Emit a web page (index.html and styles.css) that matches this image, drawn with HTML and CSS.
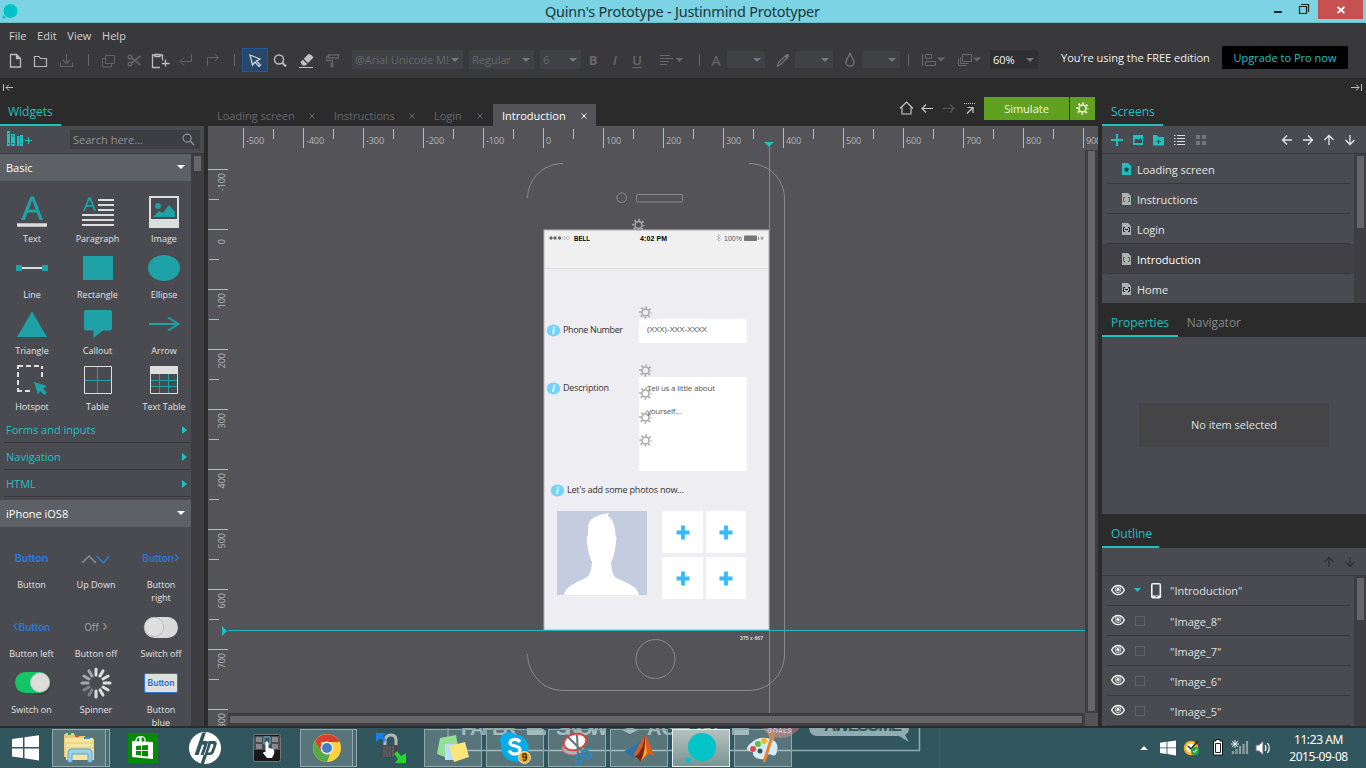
FILE: index.html
```html
<!DOCTYPE html>
<html lang="en">
<head>
<meta charset="utf-8">
<title>Quinn's Prototype - Justinmind Prototyper</title>
<link rel="stylesheet" href="styles.css">
</head>
<body>
<svg width="0" height="0" class="defs">
  <defs>
    <symbol id="gear" viewBox="0 0 14 14"><circle cx="7" cy="7" r="3.8" fill="none" stroke="currentColor" stroke-width="1.6"/><circle cx="7" cy="7" r="5.600" fill="none" stroke="currentColor" stroke-width="2.400" stroke-dasharray="1.800 2.598" stroke-dashoffset="0.900"/></symbol>
    <symbol id="info" viewBox="0 0 14 13"><ellipse cx="7" cy="6.5" rx="6.7" ry="6" fill="#72d4fb"/><path d="M7.8 2.8v1.6M7.4 5.3 6.4 9.8" stroke="#fff" stroke-width="1.7"/></symbol>
    <symbol id="eye" viewBox="0 0 14 12"><path d="M.7 6C3.5-.1 10.500-.1 13.300 6 10.500 12.100 3.500 12.100.7 6Z" fill="none" stroke="#f0f0f0" stroke-width="1.500"/><circle cx="7" cy="5.700" r="2.900" fill="none" stroke="#f0f0f0" stroke-width=".8"/><circle cx="7" cy="5.700" r="1.600" fill="#fff"/></symbol>
    <symbol id="arrow" viewBox="0 0 12 12"><path d="M11 6H2M6 1.500 1.500 6 6 10.500" fill="none" stroke="currentColor" stroke-width="1.300"/></symbol>
    <symbol id="close" viewBox="0 0 6 6"><path d="M.5.5l5 5M5.500.5l-5 5" stroke="currentColor" fill="none"/></symbol>
    <symbol id="glass" viewBox="0 0 14 14"><circle cx="5.500" cy="5.500" r="4.300" fill="none" stroke="currentColor" stroke-width="1.300"/><path d="M8.700 8.700 13 13" stroke="currentColor" stroke-width="1.600"/></symbol>
    <symbol id="page" viewBox="0 0 10 12"><path d="M0 0H6L9 3V12H0Z" fill="#a9b1b1"/><path d="M3 4.500H1.500V8.500H3M6 4.500H7.500V8.500H6" fill="none" stroke="currentColor"/></symbol>
    <symbol id="win" viewBox="0 0 27 26"><path d="M0 4 11 2.500V12H0ZM12.500 2.300 27 .2V12H12.500ZM0 13.500H11V23L0 21.500ZM12.500 13.500H27V25.500L12.500 23.300Z" fill="#fff"/></symbol>
  </defs>
</svg>
<div class="app">
  <header class="titlebar">
    <svg class="logo" width="20" height="20"><circle cx="10.500" cy="10" r="7" fill="#02c3c7"/><circle cx="4" cy="16" r="1.500" fill="#02c3c7"/></svg>
    <h1>Quinn's Prototype - Justinmind Prototyper</h1>
    <svg class="winbtns" width="50" height="20"><path d="M8 12h8" stroke="#1d2527" stroke-width="2"/><path d="M33.500 6.500h7v7h-7zM35 4.500h7.500v7.500M33 6.500h8" fill="none" stroke="#1d2527" stroke-width="1.200"/></svg>
    <div class="winclose"><svg width="8" height="8" viewBox="0 0 8 8"><path d="M.5 1l7 6M7.500 1l-7 6" stroke="#fff" stroke-width="1.800"/></svg></div>
  </header>

  <div class="commands">
    <nav class="menu"><span>File</span><span>Edit</span><span>View</span><span>Help</span></nav>
    <div class="toolbar">
      <i class="tool"><svg viewBox="0 0 26 24"><path d="M8.500 6.500h6l4 4v8.500h-10zM14.500 6.500v4h4" fill="none" stroke="#bbb" stroke-width="1.300"/><path d="M14 6v5h5z" fill="#bbb"/></svg></i>
      <i class="tool"><svg viewBox="0 0 26 24"><path d="M6.500 18.500v-10h4.500l1.500 2h6v8z" fill="none" stroke="#b5b5b5" stroke-width="1.200"/></svg></i>
      <i class="tool off"><svg viewBox="0 0 26 24"><path d="M6.500 14.500v4h12v-4M12.500 6v9M8.500 11.500l4 4 4-4" fill="none" stroke="currentColor" stroke-width="1.200"/></svg></i>
      <i class="sep"></i>
      <i class="tool off"><svg viewBox="0 0 26 24"><path d="M9.500 7.500h9v8h-9zM9 10.500h-2.500v8.500h9v-3" fill="none" stroke="currentColor"/></svg></i>
      <i class="tool off"><svg viewBox="0 0 26 24"><circle cx="8" cy="9" r="1.800" fill="none" stroke="currentColor" stroke-width="1.500"/><circle cx="8" cy="16" r="1.800" fill="none" stroke="currentColor" stroke-width="1.500"/><path d="M9.500 10 18.500 17M9.500 15 18.500 8" stroke="currentColor" stroke-width="2"/></svg></i>
      <i class="tool"><svg viewBox="0 0 26 24"><path d="M7 7h-2.500v12.500h7.500M12 7h2.500v5.500M7 6.500h5v2h-5z" fill="none" stroke="#bcbcbc" stroke-width="1.300"/><path d="M17.500 11.500v7M14 15.500h7.500" stroke="#bcbcbc" stroke-width="1.300"/></svg></i>
      <i class="tool off"><svg viewBox="0 0 26 24"><path d="M17.500 6v7.500h-11M10 9.500l-4 4 4 4" fill="none" stroke="currentColor"/></svg></i>
      <i class="tool off"><svg viewBox="0 0 26 24"><path d="M7.500 18v-8.500h11M14.500 6l4 3.500-4 4" fill="none" stroke="currentColor"/></svg></i>
      <i class="sep"></i>
      <i class="tool active"><svg viewBox="0 0 26 24"><path d="M8 7l10 4-3.500 2 4 4-1.500 1.500-4-4.500-2.500 3z" fill="none" stroke="#c9d3dc" stroke-width="1.300"/></svg></i>
      <i class="tool"><svg viewBox="0 0 26 24"><circle cx="11" cy="11.500" r="4.500" fill="none" stroke="#bbb" stroke-width="1.500"/><path d="M14 14.500l4 4" stroke="#bbb" stroke-width="2"/></svg></i>
      <i class="tool"><svg viewBox="0 0 26 24"><path d="M6.500 14l8-8q2.500-.5 5 3.500l-8 8h-3z" fill="#c2c2c2"/><path d="M9 11l4.500 4.500" stroke="#39393b" stroke-width="1.200"/><path d="M5 19.500h14" stroke="#c2c2c2"/></svg></i>
      <i class="tool off"><svg viewBox="0 0 26 24"><path d="M8.500 7h10v3h-10zM8.500 8.500h-2v4h6v2.500" fill="none" stroke="currentColor" stroke-width="1.300"/><path d="M12 14.500v5" stroke="currentColor" stroke-width="3"/></svg></i>
      <div class="combo font"><span>@Arial Unicode M!</span><b></b></div>
      <div class="combo style"><span>Regular</span><b></b></div>
      <div class="combo size"><span>6</span><b></b></div>
      <span class="fmt bold">B</span><span class="fmt ital">I</span><span class="fmt under">U</span>
      <svg class="para" width="25" height="16"><path d="M1 3.500h10M1 6.500h13M1 9.500h9M1 12.500h7" stroke="#68686a"/><path d="M17 6h7l-3.500 4z" fill="#68686a"/></svg>
      <i class="sep s1"></i>
      <span class="fmt color">A</span>
      <div class="combo swatch"><b></b></div>
      <svg class="brush" width="14" height="16"><path d="M1.500 14l1-3.500L9 4l2 2-6.500 6.500z" fill="none" stroke="#747476" stroke-width="1.200"/><path d="M8.500 4.500l2-2.500h2l.5 2.500-2 2z" fill="#747476"/></svg>
      <div class="combo swatch"><b></b></div>
      <svg class="drop" width="12" height="16"><path d="M6 1.500C4.500 5 2 7.500 2 10.500a4 3.700 0 0 0 8 0C10 7.500 7.500 5 6 1.500Z" fill="none" stroke="#777779" stroke-width="1.300"/></svg>
      <div class="combo swatch"><b></b></div>
      <i class="sep"></i>
      <svg class="arrange" width="62" height="16"><path d="M2.500 2v12M5.500 2.500h6v4h-6zM5.500 9.500h10v4h-10zM42.500 2.500h9v7h-9M42.500 2.500v7M40.500 5v6.500h8M38.500 7v6.500h8" fill="none" stroke="#68686a"/><path d="M17 5.500h8l-4 4zM53 5.500h8l-4 4z" fill="#68686a"/></svg>
      <div class="combo zoom"><span>60%</span><b></b></div>
      <span class="edition">You're using the FREE edition</span>
      <button class="upgrade">Upgrade to Pro now</button>
    </div>
  </div>

  <main class="workspace">
    <aside class="left">
      <div class="collapse"><svg width="12" height="8"><path d="M1.500 1v7M11 4.500H4M7 1.500l-3 3 3 3" fill="none" stroke="#b8bcbc"/></svg></div>
      <div class="tabs"><span class="tab on widgets">Widgets</span></div>
      <div class="search">
        <svg width="26" height="17"><path d="M1 1h3v15H1zM5 4h4v12H5zM11 6h2.500v10H11zM14 5h3v11h-3z" fill="#1fc0c0"/><path d="M2.500 3v1M2.500 13v1M6 6h2M6 13.500h2M15.500 7v1M15.500 13v1" stroke="#45464b"/><path d="M22.500 7v7M19 10.500h7" stroke="#1fc0c0" stroke-width="1.200"/></svg>
        <div class="field"><span>Search here...</span><svg width="13" height="13"><use href="#glass"/></svg></div>
      </div>
      <div class="palette">
        <div class="items">
          <div class="group">Basic<b></b></div>
          <div class="grid basic">
            <div><svg><path d="M9 30 18.500 6.500h3.500L31 30h-3.500l-2.800-7.500h-9L13 30zM16.800 19.500h6.800l-3.400-9.500z" fill="#1fa1a8"/><path d="M5 35h30" stroke="#ddd" stroke-width="3.500"/></svg>Text</div>
            <div><svg><path d="M5 21 10.500 7.500h2.200L18 21h-2l-1.500-4.200h-6L7 21zM9.200 15h4.700l-2.300-5.500z" fill="#1fa1a8"/><path d="M20 10h16M20 15h16M20 20h16M4 25h32M4 30h32M4 35h32" stroke="#ddd" stroke-width="2"/></svg>Paragraph</div>
            <div><svg><path d="M5 6h30v32H5zM7 8v21h26V8z" fill="#ddd" fill-rule="evenodd"/><circle cx="14" cy="16" r="3" fill="#1fa1a8"/><path d="M9 27l6-6 4 2 6-8 6 7v5z" fill="#1fa1a8"/></svg>Image</div>
            <div><svg><path d="M10 22h20" stroke="#ddd" stroke-width="2"/><path d="M4 19h6v6H4zM30 19h6v6h-6z" fill="#1fa1a8"/></svg>Line</div>
            <div><svg><path d="M5 10h30v24h-30z" fill="#1fa1a8"/></svg>Rectangle</div>
            <div><svg><ellipse cx="20" cy="22" rx="16" ry="13" fill="#1fa1a8"/></svg>Ellipse</div>
            <div><svg><path d="M20 9.500 35 35H5z" fill="#1fa1a8"/></svg>Triangle</div>
            <div><svg><path d="M8 8h24q2 0 2 2v16q0 2.500-2 2.500h-7L15.500 36v-7.500H8q-2 0-2-2.500V10q0-2 2-2z" fill="#1fa1a8"/></svg>Callout</div>
            <div><svg><path d="M5 22h29M24 15.500l10.500 6.500L24 28.500" fill="none" stroke="#1fa1a8" stroke-width="2"/></svg>Arrow</div>
            <div><svg><path d="M6 11V8h5M14 8h5M22 8h5M30 8v3M30 14v5M6 14v5M6 22v5M6 30v3h4M13 33h5" fill="none" stroke="#ddd" stroke-width="2"/><path d="M22 24l13 4-4 2.500 4 4-2.500 2.500-4.500-4-2 4z" fill="#1fa1a8"/></svg>Hotspot</div>
            <div><svg><path d="M6.500 8.500h27v27h-27z" fill="none" stroke="#ddd"/><path d="M19.500 9v26M7 22.500h26" stroke="#1fa1a8"/></svg>Table</div>
            <div><svg><path d="M6 8h28v8H6z" fill="#ddd"/><path d="M15.500 16v19M24.500 16v19M7 22.500h26M7 28.500h26" stroke="#1fa1a8"/><path d="M6.500 8.500h27v27h-27z" fill="none" stroke="#ddd"/></svg>Text Table</div>
          </div>
          <div class="cat">Forms and inputs<b></b></div>
          <div class="cat">Navigation<b></b></div>
          <div class="cat">HTML<b></b></div>
          <div class="group ios-head">iPhone iOS8<b></b></div>
          <div class="grid ios">
            <div><em class="strong">Button</em>Button</div>
            <div><svg><path d="M6 25l7-7 7 7" fill="none" stroke="#8b8b8e" stroke-width="1.500"/><path d="M20.500 18l7 7 6-7" fill="none" stroke="#3276d2" stroke-width="1.500"/></svg>Up Down</div>
            <div><em>Button<small>›</small></em>Button<br>right</div>
            <div><em><small>‹</small>Button</em>Button left</div>
            <div><em class="grey">Off <small>›</small></em>Button off</div>
            <div><svg><rect x="3" y="10" width="34" height="21" rx="10.500" fill="#d9dad9"/><circle cx="13" cy="20" r="9.700" fill="#dedfde" stroke="#aaa" stroke-width=".7"/></svg>Switch off</div>
            <div><svg><circle cx="29" cy="22" r="10" fill="#3d3e42"/><rect x="3" y="9" width="35" height="21" rx="10.500" fill="#13c565"/><circle cx="28" cy="19.500" r="9.700" fill="#dcdddc" stroke="#bbb" stroke-width=".5"/></svg>Switch on</div>
            <div><svg><g stroke="#ddd" stroke-width="3" stroke-linecap="round"><path d="M20 6v6"/><path d="M20 6v6" transform="rotate(30 20 20)"/><path d="M20 6v6" transform="rotate(60 20 20)"/><path d="M20 6v6" transform="rotate(90 20 20)"/><path d="M20 6v6" transform="rotate(120 20 20)"/><path d="M20 6v6" transform="rotate(150 20 20)"/><path d="M20 6v6" transform="rotate(180 20 20)"/><g stroke="#808184"><path d="M20 6v6" transform="rotate(210 20 20)"/><path d="M20 6v6" transform="rotate(240 20 20)"/></g><g stroke="#a8a8ab"><path d="M20 6v6" transform="rotate(270 20 20)"/><path d="M20 6v6" transform="rotate(300 20 20)"/><path d="M20 6v6" transform="rotate(330 20 20)"/></g></g></svg>Spinner</div>
            <div><em class="boxed"><span>Button</span></em>Button<br>blue</div>
          </div>
        </div>
        <div class="scroll"><i class="thumb t-left"></i></div>
      </div>
    </aside>

    <section class="center">
      <div class="editorbar">
        <div class="doctabs">
          <span class="doc d1">Loading screen<svg><use href="#close"/></svg></span>
          <span class="doc d2">Instructions<svg><use href="#close"/></svg></span>
          <span class="doc d3">Login<svg><use href="#close"/></svg></span>
          <span class="doc current">Introduction<svg><use href="#close"/></svg></span>
        </div>
        <div class="navicons">
          <svg viewBox="0 0 21 14"><path d="M4 7.500 10.500 1 17 7.500M6 6.500v6.500h9V6.500" fill="none" stroke="#c8caca" stroke-width="1.100"/></svg>
          <svg viewBox="0 0 21 14"><path d="M16 7.500H5M9 3.500l-4 4 4 4" fill="none" stroke="#c8caca" stroke-width="1.100"/></svg>
          <svg viewBox="0 0 21 14"><path d="M5 7.500h11M12 3.500l4 4-4 4" fill="none" stroke="#565658" stroke-width="1.100"/></svg>
          <svg viewBox="0 0 21 14"><path d="M5 2.500h11" stroke="#c8caca" stroke-dasharray="1 1"/><path d="M8 12.500l5.500-5.500M8.500 6.500h5.500v5.500" fill="none" stroke="#c8caca" stroke-width="1.200"/></svg>
        </div>
        <button class="simulate">Simulate</button>
        <button class="simgear"><svg width="13" height="13"><use href="#gear"/></svg></button>
      </div>
      <div class="hruler"><span>-500</span><span>-400</span><span>-300</span><span>-200</span><span>-100</span><span>0</span><span>100</span><span>200</span><span>300</span><span>400</span><span>500</span><span>600</span><span>700</span><span>800</span><span>900</span>
        <svg class="hmark" width="10" height="8"><path d="M0 0h10L5 5z" fill="#1fc0c0"/><path d="M5.500 5v3" stroke="#2ab0b5"/></svg>
      </div>
      <div class="editor">
        <div class="vruler"><span><u>-100</u></span><span class="zero"><u>0</u></span><span><u>100</u></span><span><u>200</u></span><span><u>300</u></span><span><u>400</u></span><span><u>500</u></span><span><u>600</u></span><span><u>700</u></span><span><u>800</u></span>
          <svg class="vmark" width="6" height="10"><path d="M0 0v10l5-5z" fill="#1fc0c0"/></svg>
        </div>
        <div class="stage">
          <svg class="canvas" width="857" height="563" viewBox="228 150 857 563">
            <g fill="none" stroke="#8a8a8d">
              <path d="M527.500 198C528 179 543 163.500 563 163.500M749 163.500C769 163.500 784 179 784.500 198V655C784 674 769 690.500 749 690.500H563C543 690.500 528 674 527.500 654"/>
              <circle cx="621.700" cy="197.700" r="4.800"/><rect x="636.500" y="194.500" width="46" height="7.500" rx="1.500"/><circle cx="655.500" cy="659" r="19.500"/>
            </g>
            <rect x="544" y="230" width="225" height="400" fill="#eeedf2" stroke="#b5b5b7"/>
            <rect x="545" y="231" width="223" height="37" fill="#f0f0f0"/><path d="M545 268.500h223" stroke="#dfdfe1"/>
            <g fill="#666"><circle cx="551" cy="238" r="1.700"/><circle cx="555" cy="238" r="1.700"/><circle cx="559.500" cy="238" r="1.700"/></g>
            <g fill="none" stroke="#aaa" stroke-width=".6"><circle cx="564" cy="238" r="1.500"/><circle cx="568" cy="238" r="1.500"/></g>
            <g class="status"><text x="574" y="240.500" textLength="16" lengthAdjust="spacingAndGlyphs">BELL</text><text x="640" y="240.500" textLength="27">4:02 PM</text><text x="724" y="241" textLength="18" class="pct">100%</text></g>
            <path d="M716.500 236l4 3.500-2 2v-7l2 2-4 3.500" fill="none" stroke="#aaa" stroke-width=".6"/>
            <rect x="744" y="235.500" width="13" height="5.500" rx=".8" fill="#777"/><path d="M758.500 237v3M760.500 238h3M762 236.500v3.500" stroke="#888" stroke-width="1"/>
            <g fill="#fff"><path d="M639 319h108v24H639zM639 377h108v94H639zM662 511h41v42h-41zM706 511h40v42h-40zM662 557h41v42h-41zM706 557h40v42h-40z"/></g>
            <g color="#aaaaad"><use href="#gear" x="632" y="218.500" width="13" height="13"/><use href="#gear" x="639" y="306" width="13" height="13"/><use href="#gear" x="639" y="364" width="13" height="13"/><use href="#gear" x="639" y="387" width="13" height="13"/><use href="#gear" x="639" y="411" width="13" height="13"/><use href="#gear" x="639" y="434" width="13" height="13"/></g>
            <use href="#info" x="546.500" y="324" width="14" height="13"/><use href="#info" x="546.500" y="382" width="14" height="13"/><use href="#info" x="550.500" y="484" width="14" height="13"/>
            <g class="label"><text x="563" y="333" textLength="60">Phone Number</text><text x="563" y="391" textLength="46">Description</text><text x="567" y="493" textLength="117">Let's add some photos now...</text></g>
            <g class="hint"><text x="647" y="332" textLength="60" lengthAdjust="spacingAndGlyphs">(XXX)-XXX-XXXX</text><text x="647" y="391" textLength="68">Tell us a little about</text><text x="647" y="414" textLength="34">yourself...</text></g>
            <rect x="557" y="511" width="90" height="84" fill="#c4cce0"/>
            <path d="M564 595C565 586 576 583 587 577Q591 575 592 562C589 557 588 550 587 542Q586 536 588 535V526C589 519 596 514.500 609 513Q607 516 609 517C613 520 615 525 615.500 535Q617 537 616 542C615 550 614 557 611 562Q612 575 615 577C626 583 638 586 639 595Z" fill="#fff"/>
            <path d="M683 525.500v14M676.500 532.500h13M726 525.500v14M719.500 532.500h13M683 571.500v14M676.500 578.500h13M726 571.500v14M719.500 578.500h13" stroke="#38baf6" stroke-width="3.800"/>
            <text class="dims" x="740" y="640" textLength="23">375 x 667</text>
            <path d="M769.500 150v563M228 630.500h857" stroke="#22b6ba"/>
          </svg>
          <div class="hscroll"><i></i></div>
        </div>
        <div class="vscroll"><i></i></div>
      </div>
    </section>

    <aside class="right">
      <div class="collapse end"><svg width="12" height="8"><path d="M10.500 1v7M0 4.500h8M5 1.500l3 3-3 3" fill="none" stroke="#b8bcbc"/></svg></div>
      <div class="tabs"><span class="tab on">Screens</span></div>
      <div class="bar">
        <svg width="110" height="16"><path d="M15 2v12M9 8h12" stroke="#1fc0c0" stroke-width="2"/><path d="M31 3h10v10H31z" fill="#1fc0c0"/><path d="M32.500 11V8l2-1.500 2 1.500 2-2 1.500 2v3z" fill="#45464b"/><path d="M51 3h4l1.500 2H62v8.500H51z" fill="#1fc0c0"/><path d="M56.500 7v5M54 9.500h5" stroke="#45464b"/><path d="M72 3.500h1.500M75 3.500h8M72 6.500h1.500M75 6.500h8M72 9.500h1.500M75 9.500h8M72 12.500h1.500M75 12.500h8" stroke="#ddd"/><path d="M94 3h4v4h-4zM100 3h4v4h-4zM94 9h4v4h-4zM100 9h4v4h-4z" fill="#747579"/></svg>
        <div class="arrows"><svg><use href="#arrow"/></svg><svg class="r180"><use href="#arrow"/></svg><svg class="r90"><use href="#arrow"/></svg><svg class="r270"><use href="#arrow"/></svg></div>
      </div>
      <div class="listwrap">
        <ul class="screens">
          <li><svg width="10" height="12"><path d="M0 0H6L9 3V12H0Z" fill="#1fc0c0"/><path d="M4.500 3.500l1 2 2 .2-1.500 1.600.5 2.200-2-1.200-2 1.200.5-2.200L1.500 5.700l2-.2z" fill="#253538"/></svg><span>Loading screen</span></li>
          <li class="red"><svg width="10" height="12"><use href="#page"/></svg><span>Instructions</span></li>
          <li><svg width="10" height="12"><use href="#page"/><path d="M3 6.500h3" stroke="#222"/></svg><span>Login</span></li>
          <li class="red sel"><svg width="10" height="12"><use href="#page"/></svg><span>Introduction</span></li>
          <li><svg width="10" height="12"><use href="#page"/><path d="M3 6.500h3" stroke="#222"/></svg><span>Home</span></li>
        </ul>
        <div class="scroll"><i class="thumb t-screens"></i></div>
      </div>
      <div class="tabs"><span class="tab on">Properties</span><span class="tab">Navigator</span></div>
      <div class="props"><div>No item selected</div></div>
      <div class="tabs"><span class="tab on outline-tab">Outline</span></div>
      <div class="bar faint"><div class="arrows"><svg class="r90"><use href="#arrow"/></svg><svg class="r270"><use href="#arrow"/></svg></div></div>
      <div class="listwrap">
        <ul class="outline">
          <li class="root"><svg width="14" height="12"><use href="#eye"/></svg><svg class="device" width="28" height="18"><path d="M0 6h7l-3.500 4z" fill="#1fc0c0"/><rect x="17.800" y="1.800" width="8.500" height="14" rx="1" fill="none" stroke="#f2f2f2" stroke-width="1.600"/><path d="M18 13.500h8v2.500h-8z" fill="#f2f2f2"/><path d="M21.500 14.500h1.500" stroke="#444"/></svg><span>"Introduction"</span></li>
          <li><svg width="14" height="12"><use href="#eye"/></svg><i></i><span>"Image_8"</span></li>
          <li><svg width="14" height="12"><use href="#eye"/></svg><i></i><span>"Image_7"</span></li>
          <li><svg width="14" height="12"><use href="#eye"/></svg><i></i><span>"Image_6"</span></li>
          <li><svg width="14" height="12"><use href="#eye"/></svg><i></i><span>"Image_5"</span></li>
        </ul>
        <div class="scroll"><i class="thumb t-outline"></i></div>
      </div>
    </aside>
  </main>

  <footer class="taskbar">
    <svg class="wall" width="520" height="40" viewBox="440 728 520 40">
      <g class="poster"><text x="461" y="735" textLength="56">PAPER</text><text x="556" y="735" textLength="52">SNOW</text><text x="647" y="735" textLength="75">A GHOST</text></g>
      <path d="M527 728h14l5 3v4h-19zM732 728h17v7h-17zM622 730l8 4 8-4-8-3z" fill="#91acb1"/>
      <path d="M448 728v22.500" fill="none" stroke="#8aa6ab"/><path d="M440 750.500h475M919.500 728v22.500H911" fill="none" stroke="#91acb1" stroke-width="1.500"/>
      <path d="M809 728q1 8 8 8h82l10 6-4-7q4-2 4-7z" fill="#91acb1"/><circle cx="781" cy="716" r="22" fill="#85686f"/>
      <text class="goals" x="767" y="733" textLength="24">GOALS</text><text class="bubble" x="824" y="731" textLength="78">AWESOME</text>
      <path d="M939.500 728v40" stroke="#3b626a"/>
    </svg>
    <div class="t start"><svg width="27" height="26"><use href="#win"/></svg></div>
    <div class="t box explorer"><svg width="34" height="34" viewBox="0 0 34 34"><path d="M2 4l2-2h8l1 3h10l1 3h8v18H2z" fill="#e9cb72"/><path d="M3 7h28l1 22H4z" fill="#f6e5a0"/><path d="M4 12h27M4 17h28" stroke="#e0c670"/><path d="M6 2h3v2H6z" fill="#29a33b"/><path d="M13 4h4v2h-4z" fill="#dd4a30"/><path d="M22 6h6v2h-6z" fill="#2a92d8"/><path d="M6 31V21q0-3 4-3h16q4 0 4 3v10h-4v-8H10v8z" fill="#9ad1ee" stroke="#5aa4ce"/></svg></div><i class="stack"></i>
    <div class="t store"><svg width="30" height="30"><path d="M0 0h30v30H0z" fill="#078a08"/><path d="M4 8l21 1v17l-21-2z" fill="#fff"/><path d="M8 9V7q1-4 5-3v5M12 9V5q3-3 5 1v3" fill="none" stroke="#fff" stroke-width="1.200"/><path d="M8 13l5-.5v4.500H8zM14 12.500l6-.5v5h-6zM8 18h5v4.500L8 22zM14 18h6v5.500l-6-.6z" fill="#078a08"/></svg></div>
    <div class="t hp"><svg width="32" height="32"><circle cx="16" cy="16" r="16" fill="#fff"/><path d="M13 1 5.500 23h4l3.500-10q1-1 2 0l-3.500 10h4L19 12q1-3-2-3h-3L17 0zM19.500 9h6q3 .5 2 4l-2.500 7q-1 3-4 3h-3l-3 9h-3.500zM22 12l-3 8.500h2q1 0 1.500-2l2-5q.2-1.500-1-1.500z" fill="#32565d"/></svg></div>
    <div class="t touch"><svg width="28" height="28"><rect x=".5" y=".5" width="27" height="27" rx="2" fill="#18191c" stroke="#777"/><path d="M1 2h26v14H1z" fill="#4b4d52"/><path d="M3 3h6v5H3zM19 3h6v5h-6zM3 10h6v5H3zM19 10h6v5h-6z" fill="#85878a"/><path d="M11 3h6v7h-6z" fill="none" stroke="#53b8df"/><path d="M12.500 8q2-2 3 1v5l4.500 1q2 1 1 5l-2 4h-5l-4-5q1-2 2.500-.5z" fill="#fff"/></svg></div>
    <div class="t box chrome"><svg width="28" height="28"><circle cx="14" cy="14" r="14" fill="#ffd23e"/><path d="M14 28A14 14 0 0 1 2 7l7 11q3 3 8 2z" fill="#55a946"/><path d="M8 8h18.500A14 14 0 0 0 2 7l6 10z" fill="#db3d32"/><circle cx="14" cy="14" r="6.400" fill="#eee"/><circle cx="14" cy="14" r="5" fill="#3f7fc4"/></svg></div><i class="stack"></i>
    <div class="t lock"><svg width="32" height="32"><path d="M10 14V8q1-5 6-5t5 5v6" fill="none" stroke="#b4b8ba" stroke-width="3"/><rect x="6" y="13" width="18" height="13" rx="2" fill="#44484a"/><path d="M9 14v11M12 14v11M15 14v11M18 14v11" stroke="#707476"/><path d="M1 1h10l-3 3 3 4-2 2-3-4-5 4z" fill="#1681ed"/><path d="M31 31H20l3-4-4-5 3-3 4 5 5-3z" fill="#23d52d"/></svg></div>
    <div class="t box wide notes"><svg width="34" height="32"><path d="M4 6l16-3 3 17-14 5L1 22z" fill="#93df95"/><path d="M9 12h13l3 16H9z" fill="#b8defc"/><path d="M13 14l16-4 4 15-15 5z" fill="#fae67a"/></svg></div>
    <div class="t box wide"><svg width="34" height="34"><circle cx="11" cy="10" r="9" fill="#04acec"/><circle cx="17" cy="17" r="13.500" fill="#04acec"/><circle cx="22" cy="23" r="8" fill="#04acec"/><path d="M22 11q-2-3-6-2.500-4 .5-4 3.500 0 2 5 3t5 4q0 4-5 4-4 0-6-3.500" fill="none" stroke="#fff" stroke-width="3.200"/><circle cx="26.500" cy="26.500" r="6" fill="#f9ad19" stroke="#ddd"/><text x="23.800" y="30" class="badge">9</text></svg></div>
    <div class="t box wide"><svg width="34" height="34"><ellipse cx="13" cy="17" rx="11" ry="7" fill="#a4b4b7" stroke="#c66"/><ellipse cx="15" cy="11" rx="11.500" ry="8" transform="rotate(-15 15 11)" fill="#f5f8f8" stroke="#d94242" stroke-width="2"/><path d="M8 6l16 16M17 4l1 20" stroke="#65767a" stroke-width="2"/><ellipse cx="27" cy="23" rx="5" ry="3" transform="rotate(35 27 23)" fill="none" stroke="#238ac9" stroke-width="2"/><ellipse cx="19" cy="28" rx="3" ry="5" transform="rotate(15 19 28)" fill="none" stroke="#238ac9" stroke-width="2"/></svg></div>
    <div class="t box wide"><svg width="32" height="30"><path d="M1 18l12-6L23 2l-6 20-7 3z" fill="#2d73a8"/><path d="M11 21Q18 9 22 1q4 8 9 22-5-4-8 0l-6 6q-1-5-5-5z" fill="#df5a17"/><path d="M22 1q-1 16-10 23 3 0 5 5l5-8z" fill="#762719"/><path d="M22 3q1 13-4 25l6-7z" fill="#f7a522"/></svg></div>
    <div class="t box wide live"><svg width="32" height="32"><circle cx="17" cy="15" r="14" fill="#02c3c7"/><circle cx="3" cy="28" r="2.800" fill="#02c3c7"/></svg></div>
    <div class="t box wide"><svg width="34" height="34"><path d="M5 12Q13 4 25 8q8 3 6 12-1 6-5 4-4-2-5 1-1 4-7 3-8-1-7-7-7-1-6-4 1-3 4-5z" fill="#d6ebf8"/><circle cx="7" cy="18" r="3" fill="#e34b4b"/><circle cx="12" cy="13" r="3" fill="#62bb46"/><circle cx="18" cy="10" r="3" fill="#f6b629"/><circle cx="14" cy="20" r="2.500" fill="#32565d"/><path d="M18 31l7-22" stroke="#e8832b" stroke-width="3"/><path d="M24 9l-2-6 8-3-2 10z" fill="#c28b5c"/></svg></div>
    <div class="tray">
      <svg width="150" height="24"><path d="M3 14h8l-4-4z" fill="#eee"/><svg x="23" y="4" width="16" height="16"><use href="#win"/></svg><circle cx="54" cy="12" r="6" fill="#fff" stroke="#f1b323" stroke-width="2.500"/><path d="M51 10l3 3 7-8" fill="none" stroke="#222" stroke-width="1.500"/><circle cx="58" cy="15" r="4.200" fill="#28a34a"/><path d="M56 15l1.500 1.500L60 13" fill="none" stroke="#fff"/><path d="M79 5v-1.500h4V5h2.500v14h-9V5z" fill="#fff" stroke="#111"/><path d="M78.500 7.500h5v9h-5z" fill="#f5f5f5" stroke="#222"/><path d="M96 18v-3M99.500 18v-5M103 18V10M106.500 18V8M110 18V5" stroke="#8fa0a2" stroke-width="2.200"/><path d="M98 4v8M94 8h8M95 5l6 6M101 5l-6 6" stroke="#eee"/><path d="M119 9h3l4-4v14l-4-4h-3z" fill="#fff" stroke="#667"/><path d="M128 9q2 3 0 6M130.500 7q3.500 5 0 10" fill="none" stroke="#fff" stroke-width="1.200"/></svg>
      <div class="clock"><div>11:23 AM</div><div>2015-09-08</div></div>
    </div>
  </footer>
</div>
</body>
</html>
```
FILE: styles.css
```css
* { box-sizing: border-box; }
body { margin: 0; width: 1366px; height: 768px; overflow: hidden; background: #2b2b2b; font: 11px/14px "Open Sans", "Noto Sans", sans-serif; color: #dfe1e1; }
.defs { position: absolute; }
svg { display: block; flex: none; }
i, u, em { font-style: normal; text-decoration: none; }
button { border: 0; padding: 0; font: inherit; }
ul { margin: 0; padding: 0; list-style: none; }
.app { height: 768px; display: flex; flex-direction: column; }

.titlebar { height: 23px; background: #7bd3e4; border-bottom: 1px solid #6ebbca; display: flex; align-items: flex-start; }
.logo { margin-top: 1px; }
.titlebar h1 { margin: 0 0 0 525px; width: 276px; font: 400 14.500px/23px "Noto Sans", sans-serif; letter-spacing: -.23px; color: #20363b; white-space: nowrap; }
.winbtns { margin-left: 445px; }
.winclose { margin-left: 2px; width: 45px; height: 19px; background: #c75050; display: flex; align-items: center; justify-content: center; }

.commands { height: 55px; background: #39393b; }
.menu { height: 25px; padding-left: 9px; display: flex; gap: 10.700px; line-height: 26px; color: #d0d2d2; }
.toolbar { height: 24px; padding-left: 2px; display: flex; align-items: center; color: #77797b; }
.tool { width: 26px; height: 24px; flex: none; }
.tool svg { width: 26px; height: 24px; }
.off { color: #626264; }
.active { background: #28476b; border: 1px solid #1d5998; }
.active svg { margin: -1px; }
.sep { width: 16px; height: 12px; flex: none; background: linear-gradient(#68686a, #68686a) 8px 0 / 1px 12px no-repeat; }
.combo { height: 19px; flex: none; padding: 0 4px 0 3px; display: flex; align-items: center; justify-content: space-between; background: #404145; color: #65686b; white-space: nowrap; overflow: hidden; margin-top: -1px; }
.combo b { flex: none; margin-left: auto; border: 4px solid transparent; border-top-color: #76797c; border-bottom: 0; }
.combo span { overflow: hidden; }
.font { width: 111px; margin-left: 6px; }
.style { width: 65px; margin-left: 6px; }
.size { width: 41px; margin-left: 6px; }
.fmt { width: 22px; flex: none; text-align: center; font-size: 13px; color: #68686a; }
.bold { font-weight: 700; margin-left: 1px; }
.ital { font-style: italic; font-weight: 600; }
.under { text-decoration: underline; font-weight: 600; text-underline-offset: 2px; }
.para { margin-left: 11px; }
.s1 { margin-left: 7px; }
.color { width: 20px; font-size: 15px; margin: 0 1px 0 -1px; }
.swatch { width: 38px; height: 17px; }
.brush { margin: 0 5px 0 11px; }
.drop { margin: 0 6px 0 11px; }
.arrange { margin-left: 4px; }
.zoom { width: 48px; margin-left: 8px; background: #303032; color: #f2f2f2; }
.edition { margin: -5px 0 0 23px; width: 151px; flex: none; white-space: nowrap; color: #eee; }
.upgrade { margin: -5px 0 0 10px; width: 126px; height: 23px; background: #000; color: #1fc0c0; }

.workspace { height: 650px; padding-bottom: 2px; display: grid; grid-template-columns: 204px 890px 264px; column-gap: 4px; }
.left, .center, .right { min-width: 0; min-height: 0; display: flex; flex-direction: column; height: 648px; overflow: hidden; }
.collapse { height: 14px; padding: 5px 0 0 2px; flex: none; }
.end { padding-left: 249px; }
.tabs { height: 34px; flex: none; display: flex; font-size: 12px; line-height: 39px; }
.tab { padding: 0 8.600px 0 9px; color: #85888a; }
.on { color: #1fc0c0; border-bottom: 2px solid #1fc0c0; }
.widgets { padding: 0 8px; }
.outline-tab { padding-right: 7px; }
.search { height: 28px; flex: none; padding: 4px 4px 0 6px; background: #4a4b50; border-bottom: 1px solid #38383b; display: flex; gap: 38px; }
.field { width: 130px; height: 19px; padding: 0 5px 0 3px; background: #3d3e42; display: flex; align-items: center; justify-content: space-between; color: #909396; }
.palette { flex: 1; min-height: 0; display: flex; }
.items { width: 191px; background: #4a4b50; overflow: hidden; }
.scroll { flex: 1; background: #3e3e42; padding: 2px 0 0 3px; }
.thumb { display: block; width: 7px; background: #666668; }
.t-left { height: 15px; }
.t-screens { height: 72px; }
.t-outline { height: 42px; }
.group { height: 27px; padding: 0 6px; background: #5d6065; color: #fff; line-height: 27px; display: flex; justify-content: space-between; align-items: center; }
.group b { border: 4px solid transparent; border-top-color: #fff; border-bottom: 0; margin-top: -2px; }
.ios-head { margin-top: 3px; }
.grid { display: grid; grid-template-columns: 64px 67px 66px; font-size: 9px; text-align: center; color: #e2e3e3; }
.grid > div { display: flow-root; }
.grid svg { width: 40px; height: 40px; margin: 0 auto; }
.basic { padding-top: 9px; height: 235px; grid-auto-rows: 56px; line-height: 17px; }
.ios { padding-top: 11px; grid-template-rows: 69px 56px 56px; grid-template-columns: 63px 66px 64px; line-height: 13px; }
.ios em { height: 40px; display: flex; align-items: center; justify-content: center; font: 600 10px "Inter", sans-serif; color: #2a78d5; }
.ios em.strong { font-size: 10.500px; font-weight: 700; }
.ios small { font-size: 15px; font-weight: 400; line-height: 10px; margin-top: -2px; }
.ios .grey { color: #929396; gap: 3px; font-weight: 500; }
.ios .boxed span { width: 34px; height: 20px; border: 1px solid #2a78d5; border-radius: 2px; background: #dedfdf; font-size: 8.500px; line-height: 19px; color: #1e6ed2; }
.cat { height: 27px; margin-left: 4px; padding: 1px 4px 0 2px; border-bottom: 1px solid #38383b; color: #1fc0c0; display: flex; align-items: center; justify-content: space-between; }
.cat b { border: 4px solid transparent; border-left: 5px solid #1fc0c0; border-right: 0; }

.editorbar { height: 48px; flex: none; display: flex; align-items: flex-start; }
.doctabs { width: 688px; height: 48px; display: flex; align-items: flex-end; color: #66686a; }
.doc { height: 22px; padding: 2px 9px 0; display: flex; justify-content: space-between; align-items: center; white-space: nowrap; }
.doc svg { width: 6px; height: 6px; }
.d1 { width: 116px; }
.d2 { width: 101px; padding-left: 10px; padding-right: 10px; }
.d3 { width: 68px; padding-right: 10px; }
.current { width: 103px; background: #545358; color: #fff; }
.navicons { margin-top: 23px; width: 88px; display: flex; }
.navicons svg { width: 21px; height: 14px; }
.simulate, .simgear { height: 23px; margin-top: 19px; background: #60a11f; color: #eef5e6; }
.simulate { width: 85px; }
.simgear { width: 25px; margin-left: 1px; padding-left: 6px; }
.hruler { position: relative; height: 24px; flex: none; padding-left: 35px; background: #545358; display: flex; overflow: hidden; font-size: 9px; color: #b5b7ba; }
.hruler span { width: 60px; flex: none; padding: 8px 0 0 3px; line-height: 13px; letter-spacing: -.1px; background: linear-gradient(#b5babb, #b5babb) 0 2px / 1px 20px no-repeat, linear-gradient(#b5babb, #b5babb) 30px 3px / 1px 10px no-repeat; }
.hmark { position: absolute; left: 556px; top: 16px; }
.editor { flex: 1; min-height: 0; display: flex; background: #545358; }
.vruler { position: relative; width: 20px; padding-top: 19px; overflow: hidden; font-size: 9px; color: #b5b7ba; }
.vruler span { height: 60px; padding: 4px 0 0 8px; display: block; background: linear-gradient(#b5babb, #b5babb) 0 0 / 20px 1px no-repeat, linear-gradient(#b5babb, #b5babb) 1px 30px / 10px 1px no-repeat; }
.vruler .zero { padding-top: 10px; }
.vruler u { display: block; width: 12px; line-height: 12px; writing-mode: vertical-rl; transform: rotate(180deg); }
.vmark { position: absolute; left: 14px; top: 476px; }
.stage { width: 857px; }
.hscroll { height: 13px; background: #3e3e42; padding: 3px 3px 0 2px; }
.hscroll i, .vscroll i { display: block; background: #666668; }
.hscroll i { height: 7px; }
.vscroll { width: 13px; height: 563px; background: #3e3e42; padding: 1px 3px 0; }
.vscroll i { height: 560px; }
.status { font: 700 7px "Liberation Sans", sans-serif; fill: #000; }
.pct { font-weight: 400; fill: #555; }
.label { font-size: 9px; fill: #333; }
.hint { font: 400 8px "Open Sans", sans-serif; fill: #555; }
.dims { font: 700 5px "Liberation Sans", sans-serif; fill: #ddd; }

.bar { height: 28px; flex: none; padding: 6px 8px 0 0; background: #4a4b50; border-bottom: 1px solid #38383b; display: flex; justify-content: space-between; }
.arrows { display: flex; gap: 9px; color: #e5e7e7; margin: 2px 2px 0 auto; }
.arrows svg { width: 12px; height: 12px; }
.faint .arrows { color: #303134; }
.r180 { transform: rotate(180deg); }
.r90 { transform: rotate(90deg); }
.r270 { transform: rotate(-90deg); }
.listwrap { display: flex; background: #4a4b50; overflow: hidden; }
.screens { width: 252px; height: 149px; overflow: hidden; }
.screens li { height: 30px; padding: 0 0 1px 20px; display: flex; align-items: center; gap: 5px; color: #222; background: linear-gradient(#38383b, #38383b) 5px 29px / 243px 1px no-repeat; }
.screens span { color: #e4e6e6; padding-top: 2px; }
.screens .red { color: #d9262c; }
.screens .sel { background-color: #414145; }
.screens .sel span { color: #fff; }
.props { height: 177px; flex: none; padding: 66px 37px 0 37px; background: #4a4b50; }
.props div { height: 44px; line-height: 44px; text-align: center; background: #454548; }
.outline { width: 252px; height: 150px; overflow: hidden; }
.outline li { height: 30px; padding-left: 9px; display: flex; align-items: center; background: linear-gradient(#38383b, #38383b) 5px 29px / 243px 1px no-repeat; }
.outline li > svg:first-child { margin-top: -3px; }
.outline i { width: 10px; height: 10px; margin: -1px 25px 0 10px; border: 1px solid #5f6165; }
.outline span { padding-top: 2px; }
.outline .root span { padding-top: 0; }
.device { margin: -1px 8px 0 9px; }

.taskbar { position: relative; height: 40px; background: #32565d; display: flex; align-items: center; overflow: hidden; }
.wall { position: absolute; left: 440px; top: 0; }
.poster { font: 900 20px "Liberation Sans", sans-serif; fill: #91acb1; }
.goals { font: 700 7px "Open Sans", sans-serif; fill: #bbb; }
.bubble { font: 900 17px "Liberation Sans", sans-serif; fill: #32565d; }
.t { position: relative; height: 38px; flex: none; display: flex; align-items: center; justify-content: center; }
.box { background: #ffffff30; border: 1px solid #91a8ac; }
.start { width: 50px; }
.explorer { width: 54px; margin-left: 2px; }
.stack { width: 4px; height: 38px; flex: none; border: 1px solid #91a8ac; border-left: 0; background: #ffffff20; }
.store { width: 30px; margin-left: 18px; }
.hp { width: 32px; margin-left: 31px; }
.touch { width: 28px; margin-left: 32px; }
.chrome { width: 53px; margin-left: 19px; }
.lock { width: 32px; margin-left: 18px; }
.wide { width: 58px; margin-left: 4px; }
.notes { margin-left: 17px; }
.live { background: linear-gradient(#b6c1be, #799593); border-color: #e9efef; }
.badge { font: 700 10px "Liberation Sans", sans-serif; fill: #222; }
.tray { margin-left: auto; padding-right: 16px; display: flex; align-items: center; }
.clock { width: 63px; margin-top: -1px; text-align: center; font: 12px/17px "Noto Sans", sans-serif; letter-spacing: -.4px; color: #fff; white-space: nowrap; }
```
